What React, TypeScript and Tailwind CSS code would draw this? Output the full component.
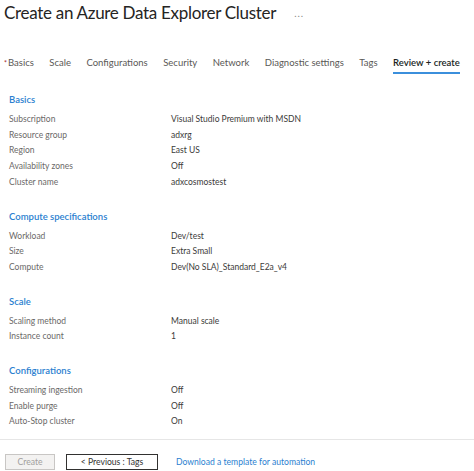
const tabs = [
  "Basics",
  "Scale",
  "Configurations",
  "Security",
  "Network",
  "Diagnostic settings",
  "Tags",
  "Review + create",
];

const sections: { title: string; rows: [string, string][] }[] = [
  {
    title: "Basics",
    rows: [
      ["Subscription", "Visual Studio Premium with MSDN"],
      ["Resource group", "adxrg"],
      ["Region", "East US"],
      ["Availability zones", "Off"],
      ["Cluster name", "adxcosmostest"],
    ],
  },
  {
    title: "Compute specifications",
    rows: [
      ["Workload", "Dev/test"],
      ["Size", "Extra Small"],
      ["Compute", "Dev(No SLA)_Standard_E2a_v4"],
    ],
  },
  {
    title: "Scale",
    rows: [
      ["Scaling method", "Manual scale"],
      ["Instance count", "1"],
    ],
  },
  {
    title: "Configurations",
    rows: [
      ["Streaming ingestion", "Off"],
      ["Enable purge", "Off"],
      ["Auto-Stop cluster", "On"],
    ],
  },
];

export default function App() {
  return (
    <div className="w-[474px] h-[471px] bg-white overflow-hidden font-['Lato',sans-serif] text-[#323130] whitespace-nowrap">
      {/* Header */}
      <div className="flex items-center pl-[4px] pt-[2px]">
        <h1 className="text-[17px] leading-[22px] text-[#252423] tracking-[-0.3px]">
          Create an Azure Data Explorer Cluster
        </h1>
        <span className="ml-[18px] text-[10px] leading-[10px] text-[#8a8886] tracking-[1px]">...</span>
      </div>

      {/* Tabs */}
      <div className="flex gap-[15.5px] pl-[4px] mt-[32px] text-[9.5px] leading-[14px]">
        {tabs.map((t, i) => {
          const active = i === tabs.length - 1;
          return (
            <div
              key={t}
              className={
                active
                  ? "pb-[2px] border-b-2 border-[#3b8fdc] text-[#201f1e] font-semibold"
                  : "pb-[2px] border-b-2 border-transparent text-[#5a5856]"
              }
            >
              {i === 0 && <span className="text-[#a4262c] text-[7px] align-top mr-[1px]">*</span>}
              {t}
            </div>
          );
        })}
      </div>

      {/* Sections */}
      <div className="pl-[9px]">
        {sections.map((s, i) => (
          <div key={s.title} className={i === 0 ? "mt-[18px]" : "mt-[18px]"}>
            <div className="text-[9.5px] text-[#2b7fd0] font-semibold leading-[16px] mb-[4px]">{s.title}</div>
            {s.rows.map(([k, v]) => (
              <div key={k} className="flex text-[8.5px] leading-[15.7px]">
                <div className="w-[162px] text-[#6b6968]">{k}</div>
                <div className="text-[#3b3a39]">{v}</div>
              </div>
            ))}
          </div>
        ))}
      </div>

      {/* Footer */}
      <div className="mt-[9px] border-t border-[#e6e6e6]" />
      <div className="flex items-center mt-[14px] pl-[5px] text-[8.6px]">
        <button className="w-[50px] h-[16px] leading-[14px] bg-[#f3f2f1] border border-[#c8c6c4] text-[#a19f9d]">
          Create
        </button>
        <button className="ml-[11px] w-[92px] h-[16px] leading-[14px] bg-white border border-[#323130] text-[#323130]">
          &lt; Previous : Tags
        </button>
        <span className="ml-[18px] text-[#2b7fd0]">Download a template for automation</span>
      </div>
    </div>
  );
}
